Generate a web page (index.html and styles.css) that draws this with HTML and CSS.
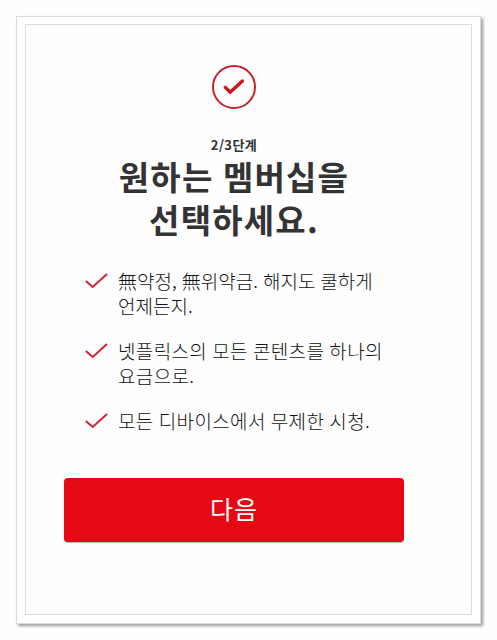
FILE: index.html
```html
<!DOCTYPE html>
<html lang="ko">
<head>
    <meta charset="UTF-8">
    <meta name="viewport" content="width=device-width, initial-scale=1.0">
    <title>원하는 멤버십을 선택하세요.</title>
    <link rel="stylesheet" href="styles.css">
</head>
<body>
    <div class="frame">
        <main class="panel">
            <svg class="step-icon" viewBox="0 0 46 46">
                <circle cx="23" cy="23" r="21" fill="none" stroke="#c5202c" stroke-width="2"/>
                <path d="M14.4 23.4l4.8 4.8L31.4 17" fill="none" stroke="#d1121d" stroke-width="3.4" stroke-linecap="round"/>
            </svg>

            <div class="step-header">
                <span class="step-count">2/3단계</span>
                <h1>원하는 멤버십을<br>선택하세요.</h1>
            </div>

            <ul class="benefits">
                <li>
                    <svg class="check" viewBox="0 0 24 18"><path d="M1.8 9l6.9 6L23 2"/></svg>
                    <span class="tight">無약정, 無위약금. 해지도 쿨하게<br>언제든지.</span>
                </li>
                <li>
                    <svg class="check" viewBox="0 0 24 18"><path d="M1.8 9l6.9 6L23 2"/></svg>
                    <span>넷플릭스의 모든 콘텐츠를 하나의<br>요금으로.</span>
                </li>
                <li>
                    <svg class="check" viewBox="0 0 24 18"><path d="M1.8 9l6.9 6L23 2"/></svg>
                    <span>모든 디바이스에서 무제한 시청.</span>
                </li>
            </ul>

            <button type="button" class="next-button">다음</button>
        </main>
    </div>
</body>
</html>
```

FILE: styles.css
```css
* {
    box-sizing: border-box;
}
body {
    margin: 0;
    padding: 16px;
    background-color: #fefefe;
    color: #333;
    font-family: "Noto Sans CJK KR", sans-serif;
}
.frame {
    width: 465px;
    height: 608px;
    padding: 7px 8px 8px;
    border: 1px solid #dadada;
    background-color: #fff;
    box-shadow: 2px 2px 3px rgba(0, 0, 0, 0.4);
}
.panel {
    display: flex;
    flex-direction: column;
    height: 591px;
    padding: 39px 67px 0 38px;
    border: 1px solid #dcdcdc;
    background-color: #fefefe;
}
.step-icon {
    width: 46px;
    height: 46px;
    align-self: center;
}
.step-header {
    margin-top: 25px;
    text-align: center;
}
.step-count {
    display: block;
    font-size: 13px;
    font-weight: 700;
    letter-spacing: 0.4px;
    line-height: 19px;
}
h1 {
    margin: 1px 0 0;
    font-size: 33px;
    font-weight: 700;
    letter-spacing: 1.2px;
    word-spacing: -1px;
    line-height: 43px;
}
.benefits {
    display: flex;
    flex-direction: column;
    gap: 20px;
    margin: 27px 0 0;
    padding: 0 0 0 20px;
    list-style: none;
}
.benefits li {
    display: flex;
    gap: 10px;
    color: #111;
    font-size: 19px;
    font-weight: 300;
    letter-spacing: 0.35px;
    word-spacing: -0.6px;
    line-height: 25px;
    white-space: nowrap;
}
.benefits .tight {
    letter-spacing: 0.05px;
}
.check {
    flex: none;
    width: 24px;
    height: 18px;
    margin-top: 4px;
}
.check path {
    fill: none;
    stroke: #cf2434;
    stroke-width: 2;
}
.next-button {
    height: 64px;
    margin-top: 45px;
    padding: 0 0 4px;
    border: none;
    border-radius: 4px;
    background-color: #e50914;
    color: #fff;
    font-family: inherit;
    font-size: 25px;
    font-weight: 400;
    letter-spacing: 1px;
    box-shadow: 0 1px 1px rgba(0, 0, 0, 0.3);
}
```
